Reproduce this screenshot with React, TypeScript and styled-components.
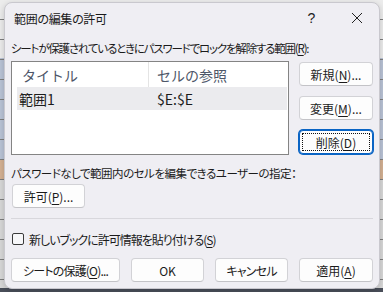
import React from "react";
import styled, { createGlobalStyle } from "styled-components";

const GlobalStyle = createGlobalStyle`
  html, body {
    margin: 0;
    padding: 0;
  }
  body {
    font-family: "Noto Sans CJK JP", "Noto Sans", sans-serif;
    font-feature-settings: "palt";
    font-size: 12px;
    color: #1b1b1b;
  }
`;

const Backdrop = styled.div`
  width: 383px;
  height: 292px;
  box-sizing: border-box;
  padding: 2px 3px 3px 4px;
  overflow: hidden;
  background:
    repeating-linear-gradient(to bottom, transparent 0 19px, #7d7d7d 19px 20px),
    linear-gradient(
      to bottom,
      #ececec 0 58px,
      #b9c3d6 58px 160px,
      #d4b193 160px 180px,
      #d8d8d8 180px 288px,
      #4a4f5a 288px
    );
`;

const Dialog = styled.div`
  width: 376px;
  height: 287px;
  box-sizing: border-box;
  display: flex;
  flex-direction: column;
  background: #efeef3;
  border: 1px solid #c9c8ce;
  border-radius: 8px;
  box-shadow: 0 2px 6px rgba(0, 0, 0, 0.18);
`;

const TitleBar = styled.div`
  height: 30px;
  display: flex;
  align-items: center;
  padding-left: 9px;
`;

const Title = styled.div`
  flex: 1;
  font-size: 12px;
  letter-spacing: -0.3px;
  color: #1a1a1a;
`;

const TitleButton = styled.div`
  width: 45px;
  height: 30px;
  display: flex;
  align-items: center;
  justify-content: center;
  font-family: "Liberation Sans", sans-serif;
  font-size: 14px;
  color: #222;
`;

const Body = styled.div`
  display: flex;
  flex-direction: column;
  padding: 0 6px;
`;

const Label = styled.div<{ $top: number; $ls: number }>`
  margin-top: ${(p) => p.$top}px;
  height: 16px;
  line-height: 16px;
  font-size: 11.5px;
  white-space: nowrap;
  letter-spacing: ${(p) => p.$ls}px;
`;

const MainRow = styled.div`
  margin-top: 5px;
  display: flex;
  gap: 10px;
`;

const ListBox = styled.div`
  width: 278px;
  height: 94px;
  box-sizing: border-box;
  background: #ffffff;
  border: 1px solid #848484;
  font-size: 14px;
  font-feature-settings: normal;
`;

const HeaderRow = styled.div`
  height: 25px;
  display: flex;
  color: #4d5668;
`;

const HeaderCell = styled.div<{ $w?: number }>`
  ${(p) => (p.$w ? `width: ${p.$w}px;` : "flex: 1;")}
  box-sizing: border-box;
  display: flex;
  align-items: center;
  padding-left: ${(p) => (p.$w ? 10 : 8)}px;
  border-right: ${(p) => (p.$w ? "1px solid #e4e4e4" : "none")};
`;

const DataRow = styled.div`
  height: 23px;
  margin: 0 1px 0 5px;
  display: flex;
  align-items: center;
  background: #ebebee;
`;

const DataCell = styled.div<{ $w?: number }>`
  ${(p) => (p.$w ? `width: ${p.$w}px;` : "flex: 1;")}
  padding-left: ${(p) => (p.$w ? 2 : 8)}px;
  box-sizing: border-box;
`;

const SideButtons = styled.div`
  display: flex;
  flex-direction: column;
  gap: 10px;
  padding-top: 1px;
`;

const Button = styled.div<{ $w: number; $focused?: boolean; $kana?: boolean }>`
  position: relative;
  width: ${(p) => p.$w}px;
  height: 24px;
  box-sizing: border-box;
  display: flex;
  align-items: center;
  justify-content: center;
  background: #fdfdfd;
  border: 1px solid ${(p) => (p.$focused ? "#0a64c4" : "#d2d2d6")};
  border-bottom-color: ${(p) => (p.$focused ? "#0a64c4" : "#c3c3c7")};
  box-shadow: ${(p) => (p.$focused ? "0 0 0 1px #0a64c4" : "none")};
  border-radius: 4px;
  white-space: nowrap;
  letter-spacing: ${(p) => (p.$kana ? "-0.8px" : "0")};

  ${(p) =>
    p.$focused &&
    `
    &::after {
      content: "";
      position: absolute;
      inset: 2px;
      border: 1px dotted #111;
    }
  `}
`;

const Key = styled.span`
  text-decoration: underline;
  text-underline-offset: 2px;
`;

const Separator = styled.div`
  margin-top: 10px;
  height: 1px;
  background: #d8d7dc;
`;

const CheckRow = styled.label`
  margin-top: 12px;
  height: 16px;
  display: flex;
  align-items: center;
  gap: 5px;
  padding-left: 1px;
`;

const CheckBox = styled.span`
  width: 12px;
  height: 12px;
  box-sizing: border-box;
  border: 1px solid #3a3a3a;
  border-radius: 2px;
  background: #f7f7f9;
`;

const CheckText = styled.span`
  white-space: nowrap;
  letter-spacing: -1px;
`;

const Footer = styled.div`
  margin-top: 11px;
  display: flex;
  gap: 11px;
`;

const CloseIcon = () => (
  <svg width="12" height="12" viewBox="0 0 12 12">
    <path d="M1 1 L11 11 M11 1 L1 11" stroke="#222" strokeWidth="1" fill="none" />
  </svg>
);

export default function App() {
  return (
    <Backdrop>
      <GlobalStyle />
      <Dialog>
        <TitleBar>
          <Title>範囲の編集の許可</Title>
          <TitleButton>?</TitleButton>
          <TitleButton>
            <CloseIcon />
          </TitleButton>
        </TitleBar>

        <Body>
          <Label $top={7} $ls={-1.2}>
            シートが保護されているときにパスワードでロックを解除する範囲(<Key>R</Key>):
          </Label>

          <MainRow>
            <ListBox>
              <HeaderRow>
                <HeaderCell $w={137}>タイトル</HeaderCell>
                <HeaderCell>セルの参照</HeaderCell>
              </HeaderRow>
              <DataRow>
                <DataCell $w={132}>範囲1</DataCell>
                <DataCell>$E:$E</DataCell>
              </DataRow>
            </ListBox>

            <SideButtons>
              <Button $w={74}>
                新規(<Key>N</Key>)...
              </Button>
              <Button $w={74}>
                変更(<Key>M</Key>)...
              </Button>
              <Button $w={74} $focused>
                削除(<Key>D</Key>)
              </Button>
            </SideButtons>
          </MainRow>

          <Label $top={10} $ls={-0.5}>
            パスワードなしで範囲内のセルを編集できるユーザーの指定：
          </Label>
          <div style={{ marginTop: 3, paddingLeft: 1 }}>
            <Button $w={73}>
              許可(<Key>P</Key>)...
            </Button>
          </div>

          <Separator />

          <CheckRow>
            <CheckBox />
            <CheckText>
              新しいブックに許可情報を貼り付ける(<Key>S</Key>)
            </CheckText>
          </CheckRow>

          <Footer>
            <Button $w={109} $kana>
              シートの保護(<Key>O</Key>)...
            </Button>
            <Button $w={73}>OK</Button>
            <Button $w={73} $kana>
              キャンセル
            </Button>
            <Button $w={74}>
              適用(<Key>A</Key>)
            </Button>
          </Footer>
        </Body>
      </Dialog>
    </Backdrop>
  );
}
